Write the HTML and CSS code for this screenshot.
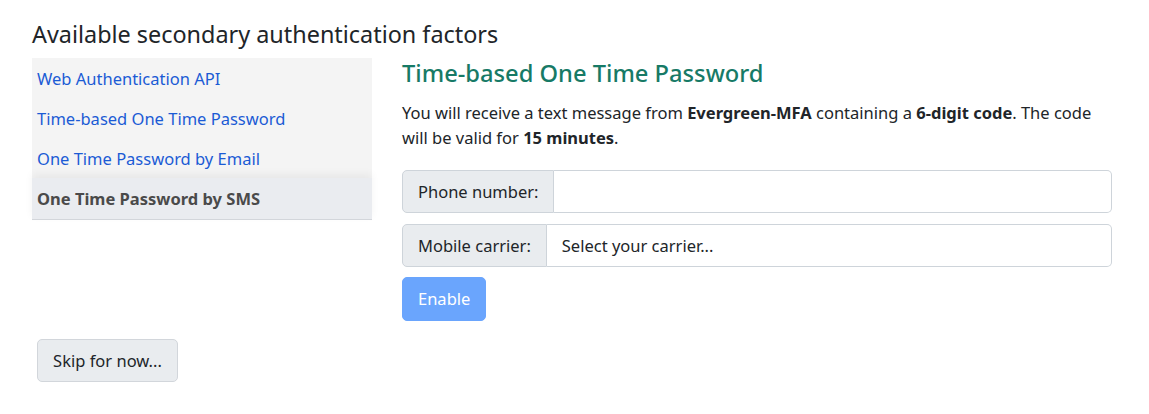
FILE: index.html
```html
<!DOCTYPE html>
<html lang="en">
<head>
<meta charset="utf-8">
<title>Secondary authentication</title>
<link rel="stylesheet" href="styles.css">
</head>
<body>
<div class="page">
  <h4 class="title">Available secondary authentication factors</h4>
  <div class="row">
    <nav class="factors">
      <a class="factor" href="#">Web Authentication API</a>
      <a class="factor" href="#">Time-based One Time Password</a>
      <a class="factor" href="#">One Time Password by Email</a>
      <a class="factor active" href="#">One Time Password by SMS</a>
    </nav>
    <section class="panel">
      <h4 class="panel-title">Time-based One Time Password</h4>
      <p class="desc">You will receive a text message from <b>Evergreen-MFA</b> containing a <b>6-digit code</b>. The code will be valid for <b>15 minutes</b>.</p>
      <div class="input-group first">
        <span class="addon">Phone number:</span>
        <input class="control" type="text">
      </div>
      <div class="input-group">
        <span class="addon">Mobile carrier:</span>
        <span class="control select">Select your carrier...</span>
      </div>
      <button class="btn btn-primary" disabled>Enable</button>
    </section>
  </div>
  <button class="btn btn-light skip">Skip for now...</button>
</div>
</body>
</html>
```

FILE: styles.css
```css
* { box-sizing: border-box; }
body {
  margin: 0;
  font-family: "Noto Sans", "Open Sans", sans-serif;
  color: #212529;
  background: #fff;
  font-size: 16.5px;
}
.page {
  padding: 19px 37px 0 32px;
}
.title {
  margin: 0 0 9px;
  font-size: 23.4px;
  font-weight: 400;
  line-height: 30px;
}
.row {
  display: flex;
  gap: 30px;
}
.factors {
  width: 340px;
  flex: none;
  background: #f4f4f4;
  display: flex;
  flex-direction: column;
  align-self: flex-start;
}
.factor {
  display: block;
  height: 40px;
  line-height: 38px;
  padding: 2px 5px 0;
  color: #1b5bd5;
  text-decoration: none;
  font-size: 16.5px;
}
.factor.active {
  height: 42px;
  background: #eaecf0;
  color: #4a4a4a;
  font-weight: 700;
  border-bottom: 1px solid #d3d6db;
  box-shadow: 0 -4px 8px rgba(0, 0, 0, 0.05);
}
.panel {
  flex: 1;
}
.panel-title {
  margin: 0 0 12px;
  color: #177a66;
  font-size: 23.7px;
  font-weight: 500;
  line-height: 30px;
}
.desc {
  margin: 0 0 20px;
  line-height: 25px;
  font-size: 16.5px;
}
.desc b { font-weight: 700; }
.input-group {
  display: flex;
  margin-bottom: 10px;
  height: 43px;
}
.input-group.first {
  margin-bottom: 11px;
}
.addon {
  display: flex;
  align-items: center;
  padding: 0 15px;
  background: #e9ecef;
  border: 1px solid #ced4da;
  border-radius: 5px 0 0 5px;
  font-size: 16.5px;
  white-space: nowrap;
}
.control {
  flex: 1;
  display: flex;
  align-items: center;
  padding: 0 15px;
  border: 1px solid #ced4da;
  border-left: none;
  border-radius: 0 5px 5px 0;
  font: inherit;
  font-size: 16.5px;
  color: #212529;
  background: #fff;
}
.btn {
  display: inline-block;
  height: 44px;
  padding: 0 15px;
  font-family: inherit;
  font-size: 16.5px;
  border-radius: 5px;
  border: 1px solid transparent;
  line-height: 42px;
}
.btn-primary {
  background: #6aa5fd;
  border-color: #6aa5fd;
  color: #fff;
  width: 84px;
}
.btn-light {
  background: #e9ecef;
  border-color: #d2d6db;
  color: #212529;
}
.skip {
  margin: 18px 0 0 5px;
  height: 43px;
  width: 141px;
}
```
